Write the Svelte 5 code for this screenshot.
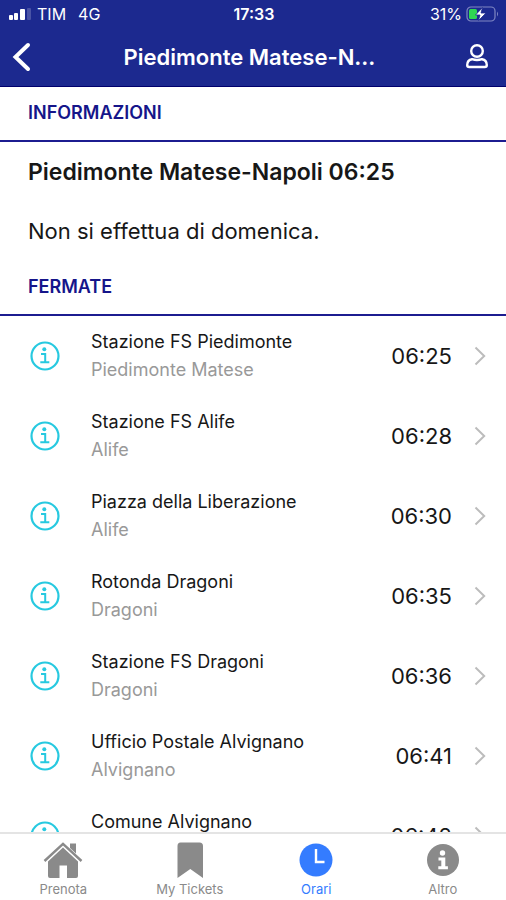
<script>
  const stops = [
    { name: 'Stazione FS Piedimonte', town: 'Piedimonte Matese', time: '06:25' },
    { name: 'Stazione FS Alife', town: 'Alife', time: '06:28' },
    { name: 'Piazza della Liberazione', town: 'Alife', time: '06:30' },
    { name: 'Rotonda Dragoni', town: 'Dragoni', time: '06:35' },
    { name: 'Stazione FS Dragoni', town: 'Dragoni', time: '06:36' },
    { name: 'Ufficio Postale Alvignano', town: 'Alvignano', time: '06:41' },
    { name: 'Comune Alvignano', town: 'Alvignano', time: '06:42' }
  ];
  const tabs = [
    { id: 'home', label: 'Prenota' },
    { id: 'tickets', label: 'My Tickets' },
    { id: 'times', label: 'Orari' },
    { id: 'more', label: 'Altro' }
  ];
  let active = $state('times');
</script>

<div class="app">
  <header>
    <div class="status">
      <div class="carrier">
        <svg width="22" height="12" viewBox="0 0 22 12" aria-hidden="true">
          <g fill="#fff">
            <rect x="0" y="7" width="4" height="5" rx="1" />
            <rect x="5" y="5" width="4" height="7" rx="1" />
            <rect x="11" y="1" width="5" height="11" rx="1" />
            <rect x="18" y="0" width="4" height="12" rx="1" opacity=".2" />
          </g>
        </svg>
        <span>TIM</span>
        <span class="network">4G</span>
      </div>
      <span class="clock">17:33</span>
      <div class="power">
        <span>31%</span>
        <svg width="33" height="16" viewBox="0 0 33 16" aria-hidden="true">
          <rect x="1" y="1" width="28" height="14" rx="4" fill="none" stroke="#8088c4" stroke-width="1.2" />
          <path d="M31 5.5q2 2.5 0 5z" fill="#8088c4" />
          <rect x="3" y="3" width="8" height="10" rx="1.5" fill="#2fd552" />
          <path d="M16.5 1.5 9.5 9h4.500l-1.500 5.500L20 7h-5z" fill="#fff" stroke="#1c298f" stroke-width=".8" />
        </svg>
      </div>
    </div>
    <div class="nav">
      <button class="icon" aria-label="Indietro">
        <svg width="20" height="30" viewBox="0 0 20 30">
          <path d="M17 3 4.500 15l12.500 12" fill="none" stroke="#fff" stroke-width="4" stroke-linecap="round" stroke-linejoin="miter" />
        </svg>
      </button>
      <h1>Piedimonte Matese-N...</h1>
      <button class="icon end" aria-label="Profilo">
        <svg width="22" height="26" viewBox="0 0 22 26" fill="none" stroke="#fff" stroke-width="2.400">
          <circle cx="11" cy="7" r="5.800" />
          <path d="M6 15.200C3 15.800 1.200 18 1.200 21q0 2 2 2h15.600q2 0 2-2c0-3-1.800-5.200-4.800-5.800q-5 1.600-10 0z" stroke-linejoin="round" />
        </svg>
      </button>
    </div>
  </header>

  <main>
    <h2>INFORMAZIONI</h2>
    <section class="info">
      <h3>Piedimonte Matese-Napoli 06:25</h3>
      <p>Non si effettua di domenica.</p>
    </section>
    <h2>FERMATE</h2>
    <ul>
      {#each stops as stop}
        <li>
          <button class="stop">
            <svg class="mark" width="30" height="30" viewBox="0 0 30 30" fill="none" stroke="#27c9e0" aria-hidden="true">
              <circle cx="15" cy="15" r="13.500" stroke-width="2.200" />
              <circle cx="14.300" cy="8.300" r="2" fill="#27c9e0" stroke="none" />
              <path d="M11 13h4.200v8M10.300 21.300h9" stroke-width="2" />
            </svg>
            <span class="place">
              <span class="name">{stop.name}</span>
              <span class="town">{stop.town}</span>
            </span>
            <span class="time">{stop.time}</span>
            <svg width="12" height="20" viewBox="0 0 12 20" aria-hidden="true">
              <path d="M1.500 1.500 10.200 10l-8.700 8.500" fill="none" stroke="#bcbcbc" stroke-width="2" />
            </svg>
          </button>
        </li>
      {/each}
    </ul>
  </main>

  <nav class="tabs">
    {#each tabs as tab}
      <button class:active={active === tab.id} onclick={() => (active = tab.id)}>
        <svg width="40" height="38" viewBox="0 0 40 38" fill="currentColor" aria-hidden="true">
          {#if tab.id === 'home'}
            <path d="M1.500 20 20 2.800 38.500 20" fill="none" stroke="currentColor" stroke-width="2.400" />
            <path d="M27 2.500h6v10l-6-5.600z" />
            <path d="M20 6.500 35 20.500V35q0 2-2 2h-9V24.500h-7.500V37H7q-2 0-2-2V20.500z" />
          {:else if tab.id === 'tickets'}
            <path d="M10.500 1.500h19q3.500 0 3.500 3.500v32L20.300 28 7.500 37V5q0-3.500 3-3.500z" />
          {:else if tab.id === 'times'}
            <circle cx="20" cy="19" r="16.500" />
            <path d="M20 8v13h8.500" fill="none" stroke="#fff" stroke-width="2.400" />
          {:else}
            <circle cx="20" cy="19" r="16" />
            <circle cx="19.500" cy="12" r="2.700" fill="#fff" />
            <path d="M15.500 16.500h6.800v8.800h2.600v3h-9.600v-3h3v-5.900h-2.800z" fill="#fff" />
          {/if}
        </svg>
        <span>{tab.label}</span>
      </button>
    {/each}
  </nav>
</div>

<style>
  :global(body) { margin: 0; background: #fff; }
  * { box-sizing: border-box; }
  .app {
    height: 100vh;
    display: flex;
    flex-direction: column;
    font-family: Inter, "Liberation Sans", sans-serif;
    color: #171717;
  }
  button { font: inherit; border: 0; padding: 0; background: none; cursor: pointer; }
  svg { display: block; flex: none; }
  header { background: #1c298f; color: #fff; border-bottom: 1px solid #00006c; }
  .status {
    height: 28px;
    padding: 0 7px 0 9px;
    display: grid;
    grid-template-columns: 1fr auto 1fr;
    align-items: center;
    font-size: 16px;
    line-height: 20px;
  }
  .carrier, .power { display: flex; align-items: center; }
  .carrier { gap: 6px; }
  .network { margin-left: 6px; }
  .clock { font-weight: 600; }
  .power { justify-content: flex-end; gap: 4px; }
  .nav {
    height: 58px;
    padding: 0 18px 0 11px;
    display: flex;
    align-items: center;
    justify-content: space-between;
  }
  .icon { width: 28px; display: flex; }
  .end { justify-content: flex-end; }
  h1 { margin: 0; font-size: 22px; line-height: 28px; font-weight: 600; }
  main { flex: 1; min-height: 0; overflow: hidden; }
  h2 {
    margin: 0;
    padding: 16px 28px 17px;
    font-size: 18px;
    line-height: 20px;
    font-weight: 600;
    color: #15158a;
    border-bottom: 2px solid #1c1c90;
  }
  .info { padding: 16px 28px; }
  h3 { margin: 0 0 31px; font-size: 23px; line-height: 28px; font-weight: 600; }
  p { margin: 0; font-size: 22px; line-height: 28px; }
  ul { list-style: none; margin: 0; padding: 0; }
  .stop {
    width: 100%;
    height: 80px;
    padding: 0 20px 0 30px;
    display: flex;
    align-items: center;
    text-align: left;
    color: inherit;
  }
  .place { flex: 1; margin-left: 31px; display: flex; flex-direction: column; font-size: 18px; line-height: 28px; }
  .town { color: #999; }
  .time { font-size: 22px; line-height: 28px; margin-right: 22px; }
  .tabs {
    height: 68px;
    flex: none;
    display: flex;
    border-top: 2px solid #e4e4e4;
    background: #fff;
  }
  .tabs button {
    flex: 1;
    display: flex;
    flex-direction: column;
    align-items: center;
    gap: 2px;
    padding-top: 7px;
    font-size: 13px;
    line-height: 16px;
    color: #8a8a8a;
  }
  .tabs .active { color: #347cff; }
</style>
